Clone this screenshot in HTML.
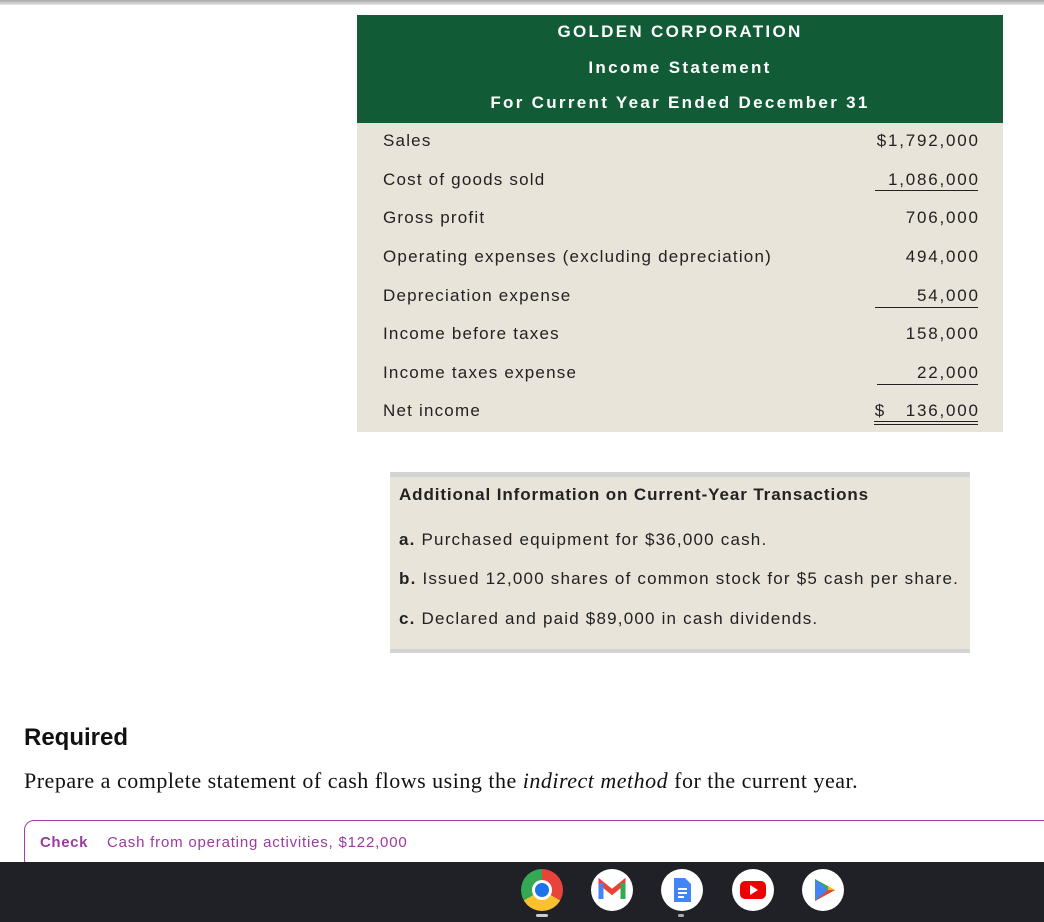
<!DOCTYPE html>
<html><head><style>
body{margin:0;width:1044px;height:922px;background:#fff;position:relative;overflow:hidden;font-family:"Liberation Sans",Arial,sans-serif;color:#222}
.topbar{position:absolute;left:0;top:0;width:1044px;height:5px;background:linear-gradient(#a9a9a9,#e6e6e6)}
.hdr{position:absolute;left:357px;top:15px;width:646px;height:108px;background:#115c36;color:#fff;font-weight:bold;text-align:center;font-size:17px;letter-spacing:2.3px}
.hdr div{position:absolute;width:100%}
.body{position:absolute;left:357px;top:123px;width:646px;height:309px;background:#e8e4da}
.r{position:absolute;left:26px;font-size:17px;color:#222;letter-spacing:1.2px}
.v{position:absolute;right:25px;font-size:17px;text-align:right;color:#222;letter-spacing:1.8px;margin-right:-1.8px}
.ul{position:absolute;right:25px;height:0;border-top:1.5px solid #222}
.add{position:absolute;left:390px;top:472px;width:580px;height:172px;background:#e8e4da;border-top:5px solid #d3d3d3;border-bottom:4px solid #d3d3d3}
.add div{position:absolute;left:9px;font-size:17px;color:#222;letter-spacing:1.2px;white-space:nowrap}
.req{position:absolute;left:24px;top:724px;font-size:24px;font-weight:bold;color:#111}
.prep{position:absolute;left:24px;top:768px;font-family:"Liberation Serif",serif;font-size:22px;color:#111;letter-spacing:0.5px}
.check{position:absolute;left:24px;top:820px;width:1040px;height:50px;border:1px solid #a53aa8;border-radius:10px;box-sizing:border-box}
.check span{position:absolute;top:13px;font-size:15px;color:#9b3aa0;letter-spacing:0.8px}
.task{position:absolute;left:0;top:862px;width:1044px;height:60px;background:#202127}
.ic{position:absolute;top:869px;width:42px;height:42px;border-radius:50%;background:#fff}
</style></head><body>
<div class="topbar"></div>
<div class="hdr">
<div style="top:7px">GOLDEN CORPORATION</div>
<div style="top:43px">Income Statement</div>
<div style="top:78px">For Current Year Ended December 31</div>
</div>
<div class="body">
<div class="r" style="top:8px">Sales</div><div class="v" style="top:8px">$1,792,000</div>
<div class="r" style="top:47px">Cost of goods sold</div><div class="v" style="top:47px">1,086,000</div><div class="ul" style="top:67px;width:103px"></div>
<div class="r" style="top:85px">Gross profit</div><div class="v" style="top:85px">706,000</div>
<div class="r" style="top:124px">Operating expenses (excluding depreciation)</div><div class="v" style="top:124px">494,000</div>
<div class="r" style="top:163px">Depreciation expense</div><div class="v" style="top:163px">54,000</div><div class="ul" style="top:184px;width:103px"></div>
<div class="r" style="top:201px">Income before taxes</div><div class="v" style="top:201px">158,000</div>
<div class="r" style="top:240px">Income taxes expense</div><div class="v" style="top:240px">22,000</div><div class="ul" style="top:261px;width:101px"></div>
<div class="r" style="top:278px">Net income</div><div class="v" style="top:278px;width:105px"><span style="float:left">$</span>136,000</div><div class="ul" style="top:298px;width:104px;border-top:1px solid #222"></div><div class="ul" style="top:301px;width:104px;border-top:1px solid #222"></div>
</div>
<div class="add">
<div style="top:8px;font-weight:bold;letter-spacing:0.9px">Additional Information on Current-Year Transactions</div>
<div style="top:53px"><b>a.</b> Purchased equipment for $36,000 cash.</div>
<div style="top:92px"><b>b.</b> Issued 12,000 shares of common stock for $5 cash per share.</div>
<div style="top:132px"><b>c.</b> Declared and paid $89,000 in cash dividends.</div>
</div>
<div class="req">Required</div>
<div class="prep">Prepare a complete statement of cash flows using the <i>indirect method</i> for the current year.</div>
<div class="check"><span style="left:15px;font-weight:bold;letter-spacing:0.6px">Check</span><span style="left:82px">Cash from operating activities, $122,000</span></div>
<div class="task">
<div style="position:absolute;left:536px;top:52px;width:12px;height:3px;background:#ccc;border-radius:2px"></div>
<div style="position:absolute;left:678px;top:52px;width:6px;height:3px;background:#aaa;border-radius:2px"></div>
</div>
<div class="ic" style="left:521px;background:conic-gradient(#e9443a 0 120deg,#fbc02d 120deg 240deg,#34a853 240deg 360deg)"><div style="position:absolute;left:11px;top:11px;width:20px;height:20px;border-radius:50%;background:#fff"></div><div style="position:absolute;left:14px;top:14px;width:14px;height:14px;border-radius:50%;background:#1a73e8"></div></div>
<div class="ic" style="left:591px"><svg width="42" height="42"><path d="M10 30V14l11 9 11-9v16" fill="none" stroke="#ea4335" stroke-width="5"/><path d="M10 14v16" stroke="#4285f4" stroke-width="5"/><path d="M32 14v16" stroke="#34a853" stroke-width="5"/></svg></div>
<div class="ic" style="left:661px"><svg width="42" height="42"><path d="M13 9h11l6 6v18H13z" fill="#4285f4"/><path d="M17 20h9M17 24h9M17 28h6" stroke="#fff" stroke-width="2"/></svg></div>
<div class="ic" style="left:732px"><svg width="42" height="42"><rect x="8" y="12" width="26" height="18" rx="5" fill="#e00"/><path d="M18 16l8 5-8 5z" fill="#fff"/></svg></div>
<div class="ic" style="left:802px"><svg width="42" height="42"><path d="M13 10l20 11-20 11z" fill="#34a853"/><path d="M13 10l13 11-13 11z" fill="#4285f4"/><path d="M26 21l7 0-7-4z" fill="#fbbc04"/><path d="M13 32l13-11 7 0z" fill="#ea4335"/></svg></div>
</body></html>
